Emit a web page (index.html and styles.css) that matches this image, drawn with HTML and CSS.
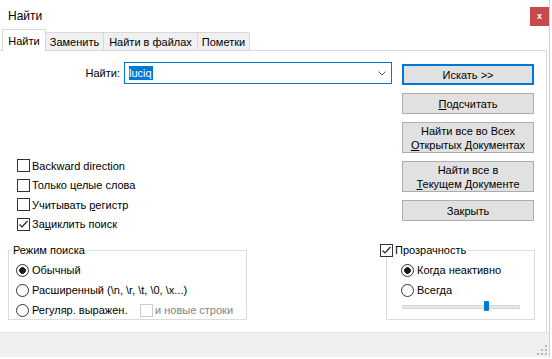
FILE: index.html
```html
<!DOCTYPE html>
<html lang="ru">
<head>
<meta charset="utf-8">
<title>Найти</title>
<link rel="stylesheet" href="styles.css">
</head>
<body>
<div class="window">
  <div class="titlebar">
    <span class="title">Найти</span>
    <span class="close">x</span>
  </div>
  <div class="tabs">
    <span class="tab active">Найти</span>
    <span class="tab t2">Заменить</span>
    <span class="tab t3">Найти в файлах</span>
    <span class="tab t4">Пометки</span>
  </div>
  <div class="panel">
    <div class="main">
      <div class="left">
        <div class="findrow">
          <span class="findlabel">Найти:</span>
          <div class="combo">
            <span class="caret"></span><span class="sel">luciq</span>
            <svg class="chev" width="8" height="5" viewBox="0 0 8 5"><polyline points="0.5,0.5 4,4 7.5,0.5" fill="none" stroke="#5a5a5a" stroke-width="1"/></svg>
          </div>
        </div>
        <div class="checks">
          <div class="chk"><span class="box"></span><span>Backward direction</span></div>
          <div class="chk"><span class="box"></span><span>Только целые слова</span></div>
          <div class="chk"><span class="box"></span><span>Учитывать <u>р</u>егистр</span></div>
          <div class="chk"><span class="box checked"><svg width="11" height="11" viewBox="0 0 11 11"><polyline points="1.5,5.5 4,8 9.5,2" fill="none" stroke="#222" stroke-width="1.2"/></svg></span><span>За<u>ц</u>иклить поиск</span></div>
        </div>
      </div>
      <div class="buttons">
        <button class="btn default">Искать &gt;&gt;</button>
        <button class="btn"><u>П</u>одсчитать</button>
        <button class="btn tall">Найти все во Всех<br><u>О</u>ткрытых Документах</button>
        <button class="btn tall">Найти все в<br><u>Т</u>екущем Документе</button>
        <button class="btn">Закрыть</button>
      </div>
    </div>
    <div class="groups">
      <fieldset class="group mode">
        <legend>Режим поиска</legend>
        <div class="rad first"><span class="radio on"></span><span>Обычный</span></div>
        <div class="rad"><span class="radio"></span><span>Расширенный (\n, \r, \t, \0, \x...)</span></div>
        <div class="rad"><span class="radio"></span><span class="regex">Регуляр. выражен.</span><span class="box disabled"></span><span class="dim">и новые строки</span></div>
      </fieldset>
      <fieldset class="group trans">
        <legend class="legline"><span class="box checked"><svg width="11" height="11" viewBox="0 0 11 11"><polyline points="1.5,5.5 4,8 9.5,2" fill="none" stroke="#222" stroke-width="1.2"/></svg></span><span>Прозрачность</span></legend>
        <div class="rad first"><span class="radio on"></span><span>Когда неактивно</span></div>
        <div class="rad"><span class="radio"></span><span>Всегда</span></div>
        <div class="slider"><span class="thumb"></span></div>
      </fieldset>
    </div>
  </div>
  <div class="footer">
    <svg class="grip" width="11" height="11" viewBox="0 0 11 11" fill="#b9b9b9">
      <rect x="8" y="0" width="2" height="2"/>
      <rect x="4" y="4" width="2" height="2"/><rect x="8" y="4" width="2" height="2"/>
      <rect x="0" y="8" width="2" height="2"/><rect x="4" y="8" width="2" height="2"/><rect x="8" y="8" width="2" height="2"/>
    </svg>
  </div>
</div>
</body>
</html>
```
FILE: styles.css
```css
* { box-sizing: border-box; }
body {
  margin: 0;
  background: #fff;
  font-family: "Liberation Sans", Arial, sans-serif;
  font-size: 11px;
  color: #000;
}
.window {
  width: 550px;
  height: 357px;
  border-right: 1px solid #cfcfcf;
  display: flex;
  flex-direction: column;
}
.titlebar {
  height: 29px;
  display: flex;
  align-items: flex-start;
  flex: none;
}
.title {
  flex: 1;
  padding: 9px 0 0 8px;
  font-size: 12px;
  line-height: 14px;
}
.close {
  width: 19px;
  height: 19px;
  margin-top: 7px;
  background: #c94a4b;
  color: #fff;
  font-size: 9px;
  font-weight: bold;
  line-height: 1;
  display: flex;
  align-items: center;
  justify-content: center;
}
.tabs {
  height: 21px;
  flex: none;
  display: flex;
  align-items: flex-end;
  padding-left: 2px;
}
.tab {
  height: 18px;
  border: 1px solid #d9d9d9;
  border-bottom: none;
  background: #f0f0f0;
  margin-left: -1px;
  display: flex;
  align-items: center;
  justify-content: center;
}
.tab.active {
  width: 44px;
  height: 22px;
  margin-left: 0;
  margin-bottom: -1px;
  background: #fff;
  position: relative;
  z-index: 1;
}
.t2 { width: 59px; }
.t3 { width: 95px; }
.t4 { width: 53px; }
.panel {
  height: 282px;
  flex: none;
  border-top: 1px solid #d9d9d9;
  border-right: 1px solid #d9d9d9;
  margin-right: 2px;
}
.main {
  height: 192px;
  display: flex;
}
.left { width: 402px; }
.findrow {
  display: flex;
  align-items: center;
  margin-top: 11px;
  height: 22px;
}
.findlabel {
  width: 120px;
  text-align: right;
  margin-right: 4px;
}
.combo {
  width: 268px;
  height: 22px;
  border: 1px solid #0078d7;
  display: flex;
  align-items: center;
  padding-left: 3px;
}
.caret {
  width: 1px;
  height: 14px;
  background: #fff;
}
.sel {
  background: #0078d7;
  color: #fff;
  line-height: 14px;
  padding: 0 1px 0 0;
}
.chev { margin-left: auto; margin-right: 5px; }
.checks { margin-top: 72px; }
.chk {
  display: flex;
  align-items: center;
  height: 19.5px;
  padding-left: 17px;
}
.box {
  width: 13px;
  height: 13px;
  border: 1px solid #333;
  background: #fff;
  margin-right: 2px;
  flex: none;
  display: flex;
}
.box svg { display: block; margin: 0; }
.box.disabled { border-color: #cccccc; }
.dim { color: #838383; }
.regex { width: 108px; flex: none; }
.buttons {
  width: 132px;
  margin-top: 13px;
  display: flex;
  flex-direction: column;
  gap: 8px;
}
.btn {
  height: 21px;
  border: 1px solid #adadad;
  background: #e1e1e1;
  font: inherit;
  color: #000;
  padding: 0;
  line-height: 14px;
}
.btn.default { border: 2px solid #0078d7; }
.btn.tall { height: 31px; }
.groups {
  display: flex;
  padding-left: 8px;
}
fieldset.group {
  margin: 0;
  border: 1px solid #dcdcdc;
  height: 77px;
  min-width: 0;
  padding: 0;
}
.mode { width: 239px; padding-left: 7px !important; }
.mode legend {
  padding: 0 1px;
  margin-left: -4px;
  line-height: 14px;
}
.trans { width: 149px; margin-left: 139px !important; padding-left: 14px !important; }
.trans legend.legline {
  display: flex;
  align-items: center;
  height: 14px;
  padding: 0 2px 0 0;
  margin-left: -21px;
  line-height: 14px;
  background: #fff;
}
.rad {
  display: flex;
  align-items: center;
  height: 20px;
}
.rad.first { margin-top: 3px; }
.radio {
  width: 13px;
  height: 13px;
  border: 1px solid #333;
  border-radius: 50%;
  margin-right: 3px;
  flex: none;
  background: #fff;
}
.radio.on {
  background: radial-gradient(circle, #1a1a1a 0 3px, #fff 3.6px);
}
.slider {
  position: relative;
  width: 118px;
  height: 4px;
  margin: 5px 0 0 1px;
  background: #e7e7e7;
  border: 1px solid #d6d6d6;
}
.thumb {
  position: absolute;
  left: 81px;
  top: -5px;
  width: 5px;
  height: 10px;
  background: #0078d7;
  border-radius: 1px;
}
.footer {
  height: 25px;
  flex: none;
  border-top: 1px solid #e2e2e2;
  background: #f0f0f0;
  display: flex;
  justify-content: flex-end;
  align-items: flex-end;
  padding: 0 1px 1px 0;
}
.grip { display: block; }
```
